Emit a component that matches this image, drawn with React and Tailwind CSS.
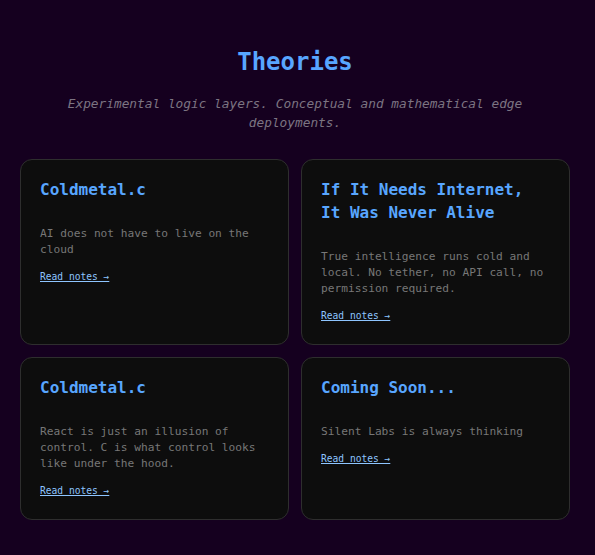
export default function App() {
  const mono = { fontFamily: '"DejaVu Sans Mono", "Liberation Mono", monospace' };
  const cards = [
    { title: "Coldmetal.c", desc: "AI does not have to live on the cloud" },
    { title: "If It Needs Internet, It Was Never Alive", desc: "True intelligence runs cold and local. No tether, no API call, no permission required." },
    { title: "Coldmetal.c", desc: "React is just an illusion of control. C is what control looks like under the hood." },
    { title: "Coming Soon...", desc: "Silent Labs is always thinking" },
  ];
  return (
    <div className="min-h-[555px] w-full bg-[#15001f] pl-5 pr-[25px] pt-[44px] pb-8" style={mono}>
      <h1 className="text-center text-[24px] leading-[36px] font-bold text-[#58a6ff]">Theories</h1>
      <p className="mx-auto mt-[14px] max-w-[470px] text-center text-[12.8px] leading-[19px] italic text-[#7c7482]">
        Experimental logic layers. Conceptual and mathematical edge deployments.
      </p>
      <div className="mt-[27px] grid grid-cols-2 gap-3">
        {cards.map((c, i) => (
          <div key={i} className="rounded-xl border border-[#2e2e2e] bg-[#0d0d0d] px-[19px] pt-[18px] pb-[21px]">
            <h3 className="text-[16px] leading-[23px] font-bold text-[#58a6ff]">{c.title}</h3>
            <p className="mt-[25px] text-[11.2px] leading-[16px] text-[#777777]">{c.desc}</p>
            <a href="#" className="mt-[12px] block w-fit text-[9.6px] leading-[14px] text-[#8ec5ff] underline">Read notes →</a>
          </div>
        ))}
      </div>
    </div>
  );
}
